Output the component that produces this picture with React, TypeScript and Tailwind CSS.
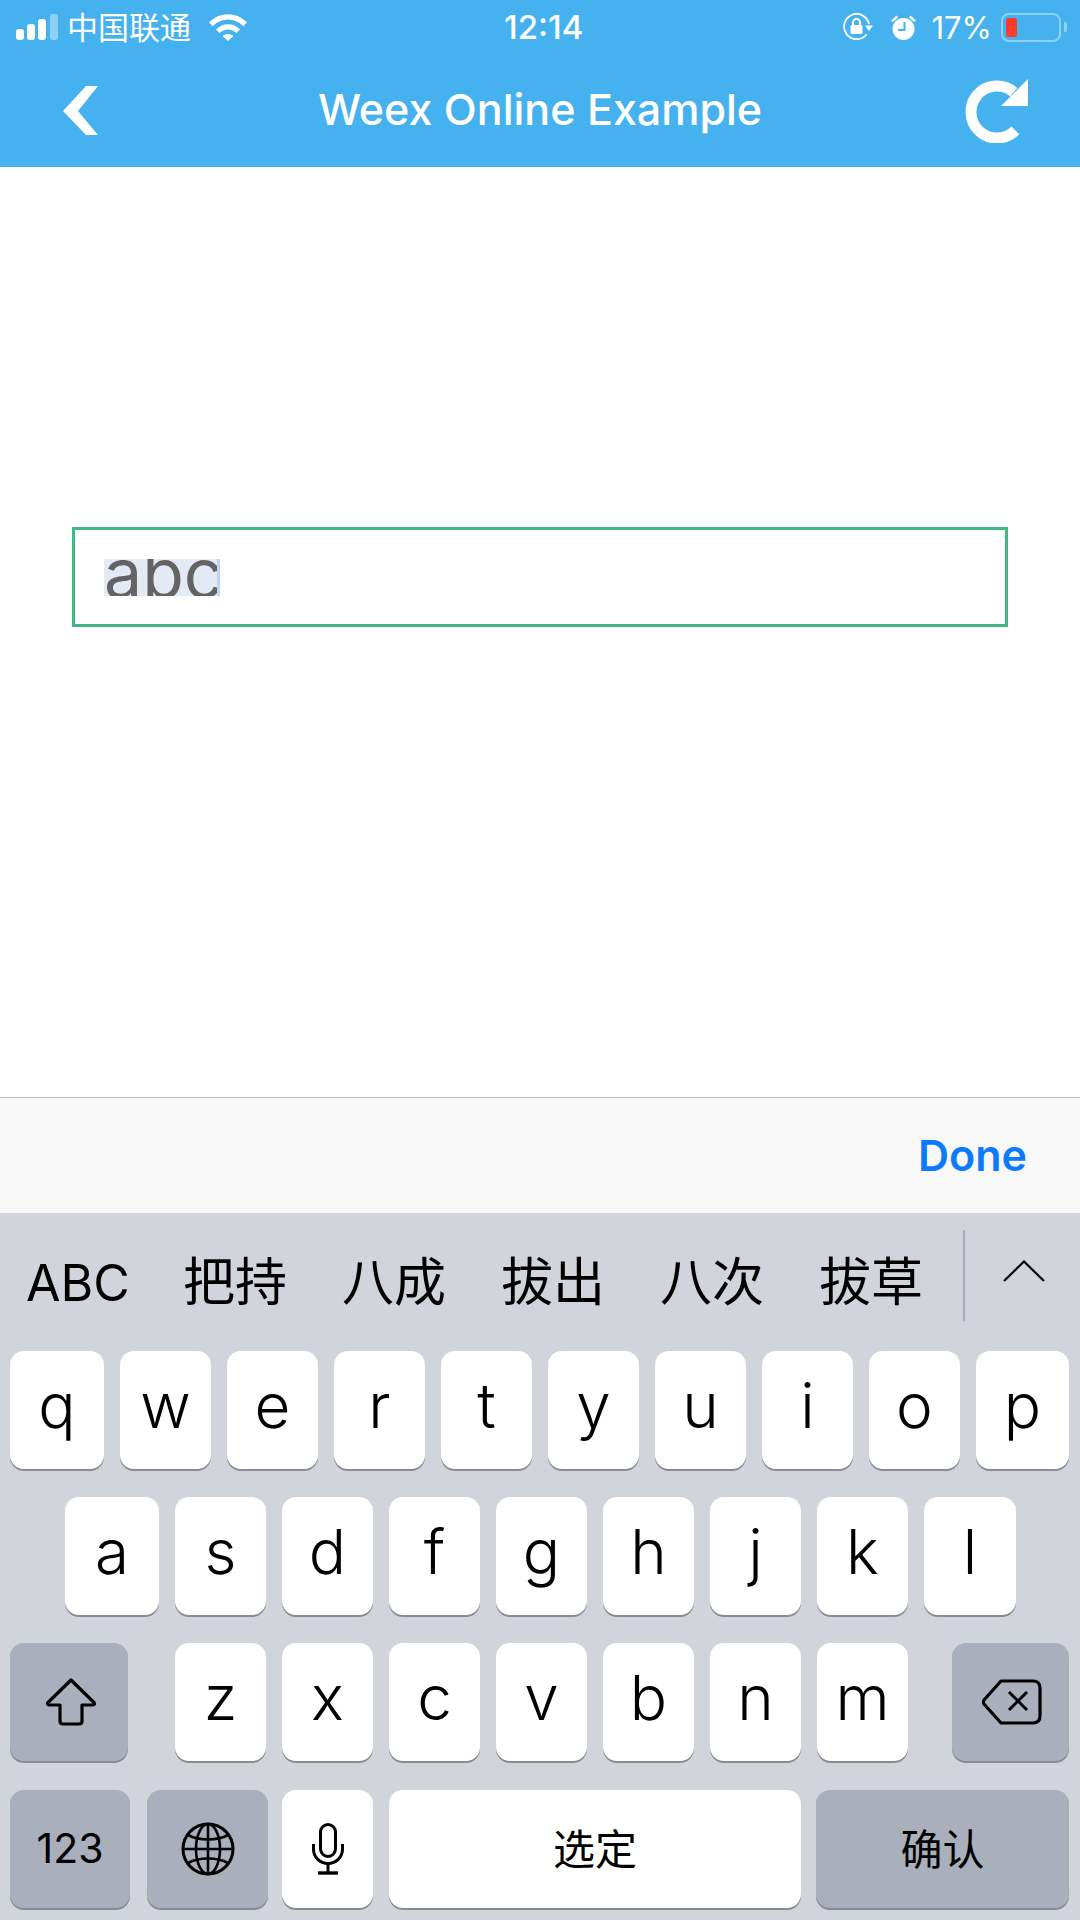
import React from "react";

const inter = "font-['Inter','Noto_Sans_CJK_SC',sans-serif]";

function Key({
  children,
  className = "w-[91px]",
  dark = false,
  text = "text-[62px]",
}: {
  children: React.ReactNode;
  className?: string;
  dark?: boolean;
  text?: string;
}) {
  return (
    <div
      className={`flex h-[118px] items-center justify-center rounded-[14px] text-black shadow-[0_2px_0_#878b93] ${
        dark ? "bg-[#a9b0bb]" : "bg-white"
      } ${text} ${className}`}
    >
      {children}
    </div>
  );
}

function Glyph({ children }: { children: React.ReactNode }) {
  return <span className="-translate-y-[5px] font-[350]">{children}</span>;
}

function Letters({ items }: { items: string[] }) {
  return (
    <>
      {items.map((k) => (
        <Key key={k}>
          <Glyph>{k}</Glyph>
        </Key>
      ))}
    </>
  );
}

function Signal() {
  return (
    <svg width="42" height="27" viewBox="0 0 42 27" className="ml-[16px]">
      <rect x="0" y="15" width="8" height="11" rx="3" fill="#fff" />
      <rect x="11" y="10" width="8" height="16" rx="3" fill="#fff" />
      <rect x="22" y="5" width="8" height="21" rx="3" fill="#fff" />
      <rect x="34" y="0" width="8" height="26" rx="3" fill="#fff" fillOpacity="0.4" />
    </svg>
  );
}

function Wifi() {
  return (
    <svg width="38" height="28" viewBox="0 0 38 28" className="ml-[18px]">
      <path d="M0 9.5C10.5 -1.6 27.5 -1.6 38 9.5L34.4 13.2C25.9 4.4 12.1 4.4 3.6 13.2Z" fill="#fff" />
      <path d="M7 16.4C13.8 9.5 24.2 9.5 31 16.4L27.4 20C22.6 15.3 15.4 15.3 10.6 20Z" fill="#fff" />
      <path d="M13.6 23C16.7 20.2 21.3 20.2 24.4 23L19 28Z" fill="#fff" />
    </svg>
  );
}

function RotationLock() {
  return (
    <svg width="30" height="28" viewBox="0 0 30 28" fill="none">
      <path d="M23.5 21.5A12.6 12.6 0 1 1 26 11" stroke="#fff" strokeWidth="1.8" />
      <path d="M22 12.5H30L26 18Z" fill="#fff" />
      <rect x="7.5" y="12" width="12" height="9" rx="1.5" fill="#fff" />
      <path d="M10 12V9.5A3.5 3.5 0 0 1 17 9.5V12" stroke="#fff" strokeWidth="2" />
    </svg>
  );
}

function Alarm() {
  return (
    <svg width="27" height="27" viewBox="0 0 27 27" className="ml-[17px]">
      <circle cx="13.5" cy="15" r="11" fill="#fff" />
      <path d="M1 6.5L6.5 1.5L8 3.5L3 8Z M26 6.5L20.5 1.5L19 3.5L24 8Z" fill="#fff" />
      <path d="M14.5 8V16H8" fill="none" stroke="#45b2ef" strokeWidth="2" />
    </svg>
  );
}

function Battery() {
  return (
    <div className="ml-[9px] flex items-center">
      <div className="h-[29px] w-[60px] rounded-[8px] border-[2px] border-white/40 p-[3px]">
        <div className="h-full w-[11px] rounded-[2px] bg-[#ff3b30]" />
      </div>
      <div className="ml-[3px] h-[10px] w-[3px] rounded-r-[2px] bg-white/40" />
    </div>
  );
}

function Back() {
  return (
    <svg width="36" height="50" viewBox="0 0 36 50" className="ml-[63px]">
      <polygon points="0,25 23,0 35,0 15,25 35,49 23,49" fill="#fff" />
    </svg>
  );
}

function Refresh() {
  return (
    <svg width="64" height="64" viewBox="0 0 64 64" fill="none" className="mr-[51px]">
      <path d="M48.7 13.1A26 26 0 1 0 50.4 51.4" stroke="#fff" strokeWidth="11" />
      <polygon points="63,0 63,27 36,27" fill="#fff" />
    </svg>
  );
}

function Shift() {
  return (
    <svg width="52" height="48" viewBox="0 0 52 48" fill="none" className="translate-x-[2px]">
      <path
        d="M26 2L49 24.5C50 25.8 49.4 27 48 27H37V43C37 45 36 46 34 46H18C16 46 15 45 15 43V27H4C2.6 27 2 25.8 3 24.5Z"
        stroke="#000"
        strokeWidth="3.2"
        strokeLinejoin="round"
      />
    </svg>
  );
}

function Del() {
  return (
    <svg width="60" height="46" viewBox="0 0 60 46" fill="none" className="translate-x-[1px]">
      <path
        d="M19 2H51C55.5 2 58 4.5 58 9V37C58 41.5 55.5 44 51 44H19L2 25C1 23.5 1 22.5 2 21Z"
        stroke="#000"
        strokeWidth="3.2"
        strokeLinejoin="round"
      />
      <path d="M27 13L45 31M45 13L27 31" stroke="#000" strokeWidth="3" />
    </svg>
  );
}

function Globe() {
  return (
    <svg width="54" height="54" viewBox="0 0 54 54" fill="none" stroke="#000" strokeWidth="2.6">
      <circle cx="27" cy="27" r="25" strokeWidth="3" />
      <ellipse cx="27" cy="27" rx="12" ry="25" />
      <path d="M27 2V52M2 27H52" />
      <path d="M7 13C18 19 36 19 47 13M7 41C18 35 36 35 47 41" />
    </svg>
  );
}

function Mic() {
  return (
    <svg width="32" height="52" viewBox="0 0 32 52" fill="none" stroke="#000" strokeWidth="3">
      <rect x="8.5" y="1.5" width="15" height="32" rx="7.5" />
      <path d="M1.5 21V26C1.5 34.5 8 40.5 16 40.5C24 40.5 30.5 34.5 30.5 26V21" />
      <path d="M16 40.5V49" />
      <path d="M6 50H26" strokeWidth="3.4" />
    </svg>
  );
}

function Chevron() {
  return (
    <svg width="44" height="22" viewBox="0 0 44 22" fill="none" className="ml-[37px] -translate-y-[11px]">
      <path d="M2 21L22 1.5L42 21" stroke="#000" strokeWidth="2.2" />
    </svg>
  );
}

export default function App() {
  return (
    <div className={`flex h-[1920px] w-[1080px] flex-col overflow-hidden bg-white ${inter}`}>
      <header className="h-[167px] bg-[#45b2ef] text-white">
        <div className="flex h-[54px] items-center">
          <div className="flex w-[400px] items-center">
            <Signal />
            <span className="ml-[9px] text-[31px] leading-none">中国联通</span>
            <Wifi />
          </div>
          <span className="ml-[104px] text-[33px] font-medium leading-none">12:14</span>
          <div className="ml-auto flex items-center pr-[13px]">
            <RotationLock />
            <Alarm />
            <span className="ml-[14px] text-[31px] leading-none">17%</span>
            <Battery />
          </div>
        </div>
        <div className="flex h-[113px] items-center">
          <div className="flex flex-1">
            <Back />
          </div>
          <span className="-translate-y-[1px] text-[43px] font-medium leading-none">Weex Online Example</span>
          <div className="flex flex-1 justify-end">
            <Refresh />
          </div>
        </div>
      </header>

      <main className="flex-1 bg-white pl-[72px] pr-[72px] pt-[360px]">
        <div className="h-[100px] w-[936px] border-[3px] border-[#41b883] pl-[29px] pt-[29px]">
          <div className="relative h-[37px] w-[116px] overflow-hidden bg-[#e3eaf5]">
            <span className="-mt-[26px] block text-[68px] leading-[80px] text-[#636363]">abc</span>
            <div className="absolute right-0 top-0 h-full w-[3px] bg-[#c0d2f5]" />
          </div>
        </div>
      </main>

      <div className="flex h-[116px] items-center justify-end border-t border-[#bcbcbc] bg-[#f8f8f8] pr-[53px]">
        <span className="text-[43px] font-semibold leading-none text-[#0a7aff]">Done</span>
      </div>

      <div className="h-[707px] bg-[#d1d4da]">
        <div className="flex h-[138px] items-center pl-[26px] text-black">
          <span className="w-[101px] translate-y-[1px] text-[50px] leading-none">ABC</span>
          <div className="ml-[56px] flex translate-y-[1px] gap-[55px] text-[52px] leading-none">
            <span>把持</span>
            <span>八成</span>
            <span>拔出</span>
            <span>八次</span>
            <span>拔草</span>
          </div>
          <div className="ml-[40px] h-[91px] w-[2px] -translate-y-[7px] bg-[#a9adb6]" />
          <Chevron />
        </div>

        <div className="flex gap-[16px] pl-[10px]">
          <Key className="w-[94px]"><Glyph>q</Glyph></Key>
          <Letters items={["w", "e", "r", "t", "y", "u", "i", "o"]} />
          <Key className="w-[93px]"><Glyph>p</Glyph></Key>
        </div>

        <div className="mt-[28px] flex gap-[16px] pl-[65px]">
          <Key className="w-[94px]"><Glyph>a</Glyph></Key>
          <Letters items={["s", "d", "f", "g", "h", "j", "k"]} />
          <Key className="w-[92px]"><Glyph>l</Glyph></Key>
        </div>

        <div className="mt-[28px] flex pl-[10px]">
          <Key dark className="w-[118px]"><Shift /></Key>
          <div className="ml-[47px] flex gap-[16px]">
            <Letters items={["z", "x", "c", "v", "b", "n", "m"]} />
          </div>
          <Key dark className="ml-[44px] w-[117px]"><Del /></Key>
        </div>

        <div className="mt-[29px] flex pl-[10px]">
          <Key dark className="w-[120px]" text="text-[41px]">123</Key>
          <Key dark className="ml-[17px] w-[121px]"><Globe /></Key>
          <Key className="ml-[14px] w-[91px]"><Mic /></Key>
          <Key className="ml-[16px] w-[412px]" text="text-[42px]">选定</Key>
          <Key dark className="ml-[15px] w-[253px]" text="text-[42px]">确认</Key>
        </div>
      </div>
    </div>
  );
}
